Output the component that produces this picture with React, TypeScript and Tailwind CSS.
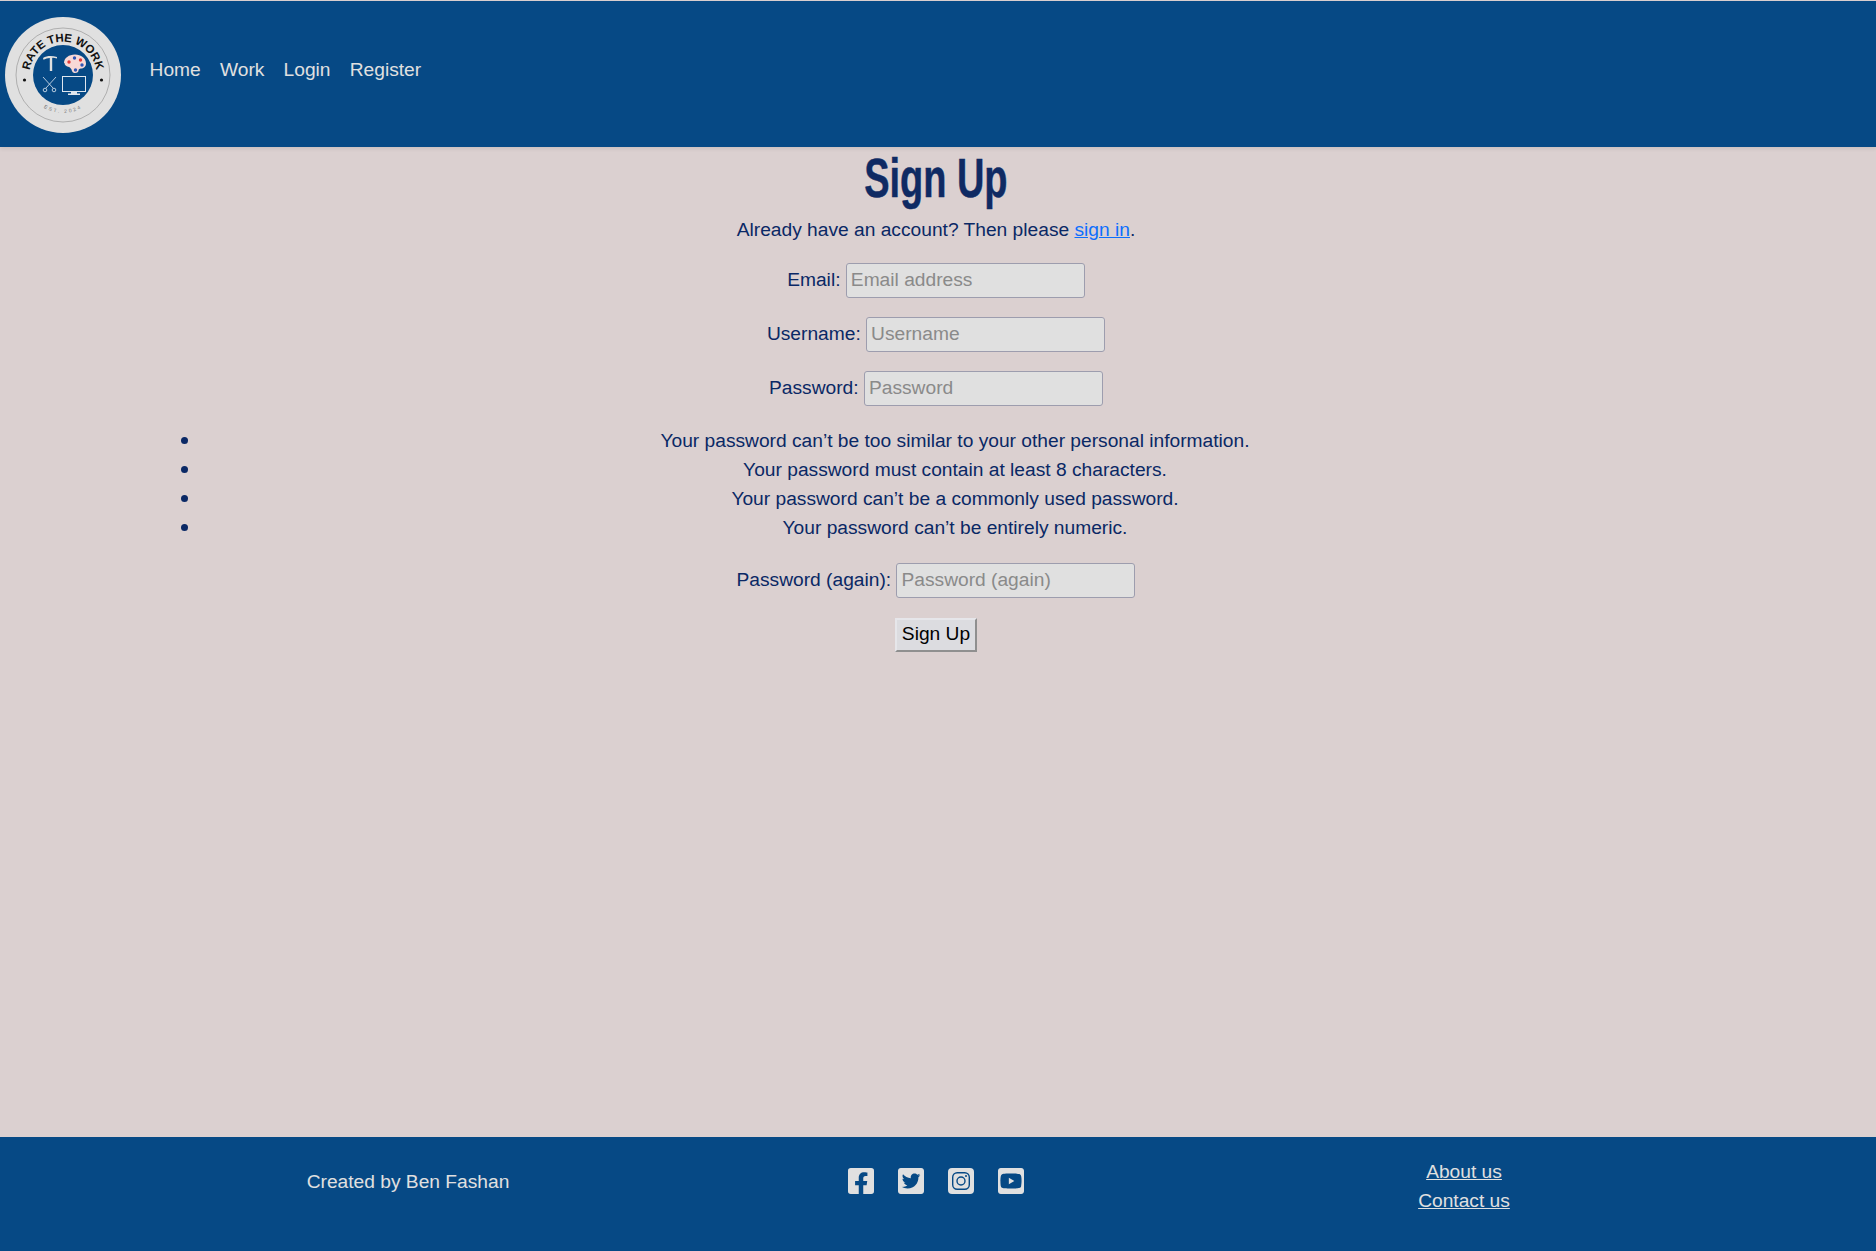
import { FaFacebookSquare, FaTwitterSquare, FaYoutubeSquare } from "react-icons/fa"

function Logo() {
  return (
    <svg width="116" height="116" viewBox="0 0 116 116" className="shrink-0 mt-[2px]">
      <defs>
        <path id="topArc" d="M 26.500 69.500 A 33.500 33.500 0 1 1 89.500 69.500" />
        <path id="bottomArc" d="M 20 58 A 38 38 0 0 0 96 58" />
      </defs>
      <circle cx="58" cy="58" r="58" fill="#e0e0e0" />
      <circle cx="58" cy="58" r="47" fill="none" stroke="#8d8d8d" strokeWidth="0.6" />
      <circle cx="58" cy="58" r="30" fill="#064985" />
      <text fontSize="11.500" fontWeight="700" fill="#111" letterSpacing="-0.1" style={{ fontFamily: '"Liberation Sans", sans-serif' }}>
        <textPath href="#topArc" startOffset="50%" textAnchor="middle">RATE THE WORK</textPath>
      </text>
      <text fontSize="5" fill="#777" letterSpacing="2" style={{ fontFamily: '"Liberation Sans", sans-serif' }}>
        <textPath href="#bottomArc" startOffset="50%" textAnchor="middle">EST. 2024</textPath>
      </text>
      <circle cx="19.500" cy="63" r="1.600" fill="#111" />
      <circle cx="96.500" cy="63" r="1.600" fill="#111" />
      {/* hammer */}
      <path d="M38 41c4-2.500 9-2.500 14-1l0 1.500c-2-.6-3.500-.7-4.800-.6l0 13.100h-2.400l0-13c-2.200.2-4.300.8-6.300 1.800z" fill="#e0e0e0" />
      {/* palette */}
      <path d="M59 46c0-5 5-8.500 11-8.500s11 3.500 11 9c0 3.500-2.500 5-5 5-1.800 0-2.500 1-2.500 2 0 1.500-1 2.500-3.500 2.500-2.800 0-3-2.500-3.800-4s-1.700-1.800-3.200-2.300-3.500-1.500-3.500-3.700z" fill="#f8d9d6" />
      <circle cx="64" cy="45" r="1.700" fill="#e23b3b" />
      <circle cx="69.500" cy="41" r="1.700" fill="#2f55b5" />
      <circle cx="75.500" cy="43" r="1.700" fill="#e23b3b" />
      <circle cx="77" cy="48" r="1.700" fill="#2f55b5" />
      <circle cx="70.500" cy="53" r="1.700" fill="#2f55b5" />
      {/* scissors */}
      <g stroke="#c9d8e6" strokeWidth="0.9" fill="none">
        <path d="M38 60l10 11M51 60L41 71" />
        <circle cx="40" cy="73" r="1.800" />
        <circle cx="49" cy="73" r="1.800" />
      </g>
      {/* monitor */}
      <rect x="57.500" y="59.500" width="23" height="15" fill="none" stroke="#dfe6ee" strokeWidth="1" />
      <path d="M66 74.500h6v2h3V78H63v-1.500h3z" fill="#dfe6ee" />
    </svg>
  )
}

function InstagramIcon() {
  return (
    <svg width="26" height="30" viewBox="0 0 26 30">
      <rect x="0" y="2" width="26" height="26" rx="4" fill="#e0e0e0" />
      <rect x="4.700" y="6.700" width="16.600" height="16.600" rx="4.500" fill="none" stroke="#064985" strokeWidth="1.400" />
      <circle cx="13" cy="15" r="4" fill="none" stroke="#064985" strokeWidth="1.400" />
      <circle cx="18" cy="10" r="1" fill="#064985" />
    </svg>
  )
}

const navLinks = ["Home", "Work", "Login", "Register"]
const passwordRules = [
  "Your password can’t be too similar to your other personal information.",
  "Your password must contain at least 8 characters.",
  "Your password can’t be a commonly used password.",
  "Your password can’t be entirely numeric.",
]

const inputClass =
  "w-[239px] h-[35px] align-middle bg-[#e0e0e0] border border-[#9d9dae] rounded-[3px] px-[4px] placeholder:text-[#8a8a8a] text-[19.2px]"

export default function App() {
  return (
    <div
      className="min-h-screen flex flex-col bg-[#dbd0d0] text-[19.2px] leading-[28.8px] text-[#0a2865]"
      style={{ fontFamily: '"Liberation Sans", Arial, sans-serif' }}
    >
      {/* Header */}
      <header className="h-[146px] mt-px shrink-0 flex items-center bg-[#064985] pl-[5px] shadow-[0_2px_4px_rgba(0,0,0,0.08)]">
        <Logo />
        <nav className="flex ml-[19px] mb-[7px]">
          {navLinks.map((link) => (
            <a key={link} href="#" className="px-[9.6px] text-[#e0e0e0]">
              {link}
            </a>
          ))}
        </nav>
      </header>

      {/* Main Content */}
      <main className="flex-1 w-[1872px]">
        <div className="text-center">
          <h1
            className="inline-block h-[57px] mt-[3px] text-[55px] leading-[57px] font-bold scale-x-[0.69] text-[#0f2a63] [-webkit-text-stroke:0.5px_#0f2a63]"
          >
            Sign Up
          </h1>
          <p className="mt-[9px] mb-[18px]">
            Already have an account? Then please{" "}
            <a href="#" className="text-[#0d6efd] underline">sign in</a>.
          </p>
        </div>

        <form className="w-[1560px] mx-auto">
          <p className="text-center mb-[19px]">
            <label>Email:</label> <input className={inputClass} placeholder="Email address" />
          </p>
          <p className="text-center mb-[19px]">
            <label>Username:</label> <input className={inputClass} placeholder="Username" />
          </p>
          <p className="text-center mb-[19px]">
            <label>Password:</label> <input className={inputClass} placeholder="Password" />
          </p>
          <ul className="list-disc ml-[5px] mr-[7px] mt-[20px] pl-10 mb-[20px] marker:text-[22px]">
            {passwordRules.map((rule) => (
              <li key={rule} className="h-[29.2px] text-center">{rule}</li>
            ))}
          </ul>
          <p className="text-center mb-[20px]">
            <label>Password (again):</label> <input className={inputClass} placeholder="Password (again)" />
          </p>
          <div className="text-center">
            <button
              type="button"
              className="h-[34px] w-[82px] bg-[#dcdce0] text-black border-2 border-t-[#e6e6ea] border-l-[#e6e6ea] border-r-[#8f8f8f] border-b-[#8f8f8f]"
            >
              Sign Up
            </button>
          </div>
        </form>
      </main>

      {/* Footer */}
      <footer className="h-[114px] shrink-0 bg-[#064985] text-[#e0e0e0]">
        <div className="w-[1584px] ml-[144px] grid grid-cols-3 pt-[21px] text-center">
          <p className="pt-[10px]">Created by Ben Fashan</p>
          <div className="flex justify-center gap-6 pt-[8px]">
            <FaFacebookSquare className="w-[26px] h-[30px]" />
            <FaTwitterSquare className="w-[26px] h-[30px]" />
            <InstagramIcon />
            <FaYoutubeSquare className="w-[26px] h-[30px]" />
          </div>
          <div className="flex flex-col items-center">
            <a href="#" className="underline">About us</a>
            <a href="#" className="underline">Contact us</a>
          </div>
        </div>
      </footer>
    </div>
  )
}
